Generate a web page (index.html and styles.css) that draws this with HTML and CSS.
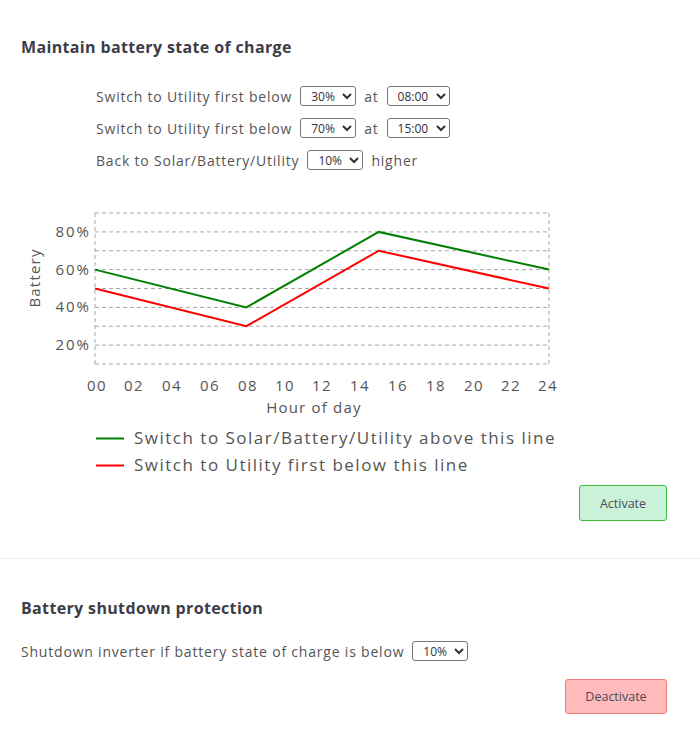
FILE: index.html
```html
<!DOCTYPE html>
<html lang="en">
<head>
    <meta charset="UTF-8">
    <meta name="viewport" content="width=device-width, initial-scale=1.0">
    <title>Battery settings</title>
    <link rel="stylesheet" href="styles.css">
</head>
<body>
    <!-- State of charge schedule -->
    <section class="panel panel-soc">
        <h2>Maintain battery state of charge</h2>

        <div class="options">
            <div class="option-row">
                <span>Switch to Utility first below</span>
                <select class="sel-pct"><option>30%</option></select>
                <span>at</span>
                <select class="sel-time"><option>08:00</option></select>
            </div>
            <div class="option-row">
                <span>Switch to Utility first below</span>
                <select class="sel-pct"><option>70%</option></select>
                <span>at</span>
                <select class="sel-time"><option>15:00</option></select>
            </div>
            <div class="option-row">
                <span>Back to Solar/Battery/Utility</span>
                <select class="sel-pct"><option>10%</option></select>
                <span>higher</span>
            </div>
        </div>

        <svg class="chart" width="560" height="280" viewBox="0 200 560 280">
            <g class="grid">
                <line x1="95" y1="213" x2="549" y2="213" />
                <line x1="95" y1="231.9" x2="549" y2="231.9" />
                <line x1="95" y1="250.75" x2="549" y2="250.75" />
                <line x1="95" y1="269.6" x2="549" y2="269.6" />
                <line x1="95" y1="288.5" x2="549" y2="288.5" />
                <line x1="95" y1="307.4" x2="549" y2="307.4" />
                <line x1="95" y1="326.2" x2="549" y2="326.2" />
                <line x1="95" y1="345.1" x2="549" y2="345.1" />
                <line x1="95" y1="364" x2="549" y2="364" />
                <line x1="95" y1="213" x2="95" y2="364" />
                <line x1="549" y1="213" x2="549" y2="364" />
            </g>
            <g class="y-ticks">
                <text x="91" y="237">80%</text>
                <text x="91" y="275">60%</text>
                <text x="91" y="312">40%</text>
                <text x="91" y="350">20%</text>
            </g>
            <text class="axis-title" transform="translate(40 278) rotate(-90)">Battery</text>
            <g class="x-ticks">
                <text x="97" y="391">00</text>
                <text x="134" y="391">02</text>
                <text x="172" y="391">04</text>
                <text x="210" y="391">06</text>
                <text x="248" y="391">08</text>
                <text x="285" y="391">10</text>
                <text x="322" y="391">12</text>
                <text x="360" y="391">14</text>
                <text x="398" y="391">16</text>
                <text x="436" y="391">18</text>
                <text x="474" y="391">20</text>
                <text x="511" y="391">22</text>
                <text x="548" y="391">24</text>
            </g>
            <text class="axis-title" x="314" y="413">Hour of day</text>

            <polyline class="line-green" points="95,269.6 246.3,307.4 378.75,231.9 549,269.6" />
            <polyline class="line-red" points="95,288.5 246.3,326.2 378.75,250.75 549,288.5" />

            <g class="legend">
                <line class="line-green" x1="96" y1="438.5" x2="124" y2="438.5" />
                <text x="134" y="444">Switch to Solar/Battery/Utility above this line</text>
                <line class="line-red" x1="96" y1="465.5" x2="124" y2="465.5" />
                <text x="134" y="471">Switch to Utility first below this line</text>
            </g>
        </svg>

        <div class="actions">
            <button class="btn btn-activate">Activate</button>
        </div>
    </section>

    <!-- Low battery shutdown -->
    <section class="panel panel-shutdown">
        <h2>Battery shutdown protection</h2>
        <div class="option-row">
            <span>Shutdown inverter if battery state of charge is below</span>
            <select class="sel-pct"><option>10%</option></select>
        </div>
        <div class="actions">
            <button class="btn btn-deactivate">Deactivate</button>
        </div>
    </section>
</body>
</html>
```

FILE: styles.css
```css
body { margin: 0; font-family: "Open Sans", sans-serif; color: #555; background: #fff; }
.panel { padding: 37px 33px 0 21px; }
.panel-soc { padding-bottom: 37px; border-bottom: 1px solid #eee; }
.panel-shutdown { padding-top: 39px; }
h2 { margin: 0; font-size: 16px; line-height: 20px; font-weight: 700; color: #3d3d48; letter-spacing: 0.35px; }
.options { margin: 23px 0 0 75px; }
.option-row { display: flex; align-items: center; gap: 8px; height: 32px; font-size: 14px; letter-spacing: 0.8px; }
.panel-shutdown .option-row { margin-top: 17px; }
select { font-family: "Open Sans", sans-serif; font-size: 12px; letter-spacing: 0; height: 20px; padding: 0 4px 0 6px; color: #333; border: 1px solid #767676; border-radius: 3px; background: #fff; }
.sel-pct { width: 56px; }
.sel-time { width: 63px; }
.chart { display: block; margin: 24px 0 0 -21px; }
.chart text { font-family: "Open Sans", sans-serif; fill: #555; }
.grid line { stroke: #a8a8a8; stroke-width: 1; stroke-dasharray: 4 3; }
.y-ticks text { font-size: 15px; text-anchor: end; letter-spacing: 2px; }
.x-ticks text { font-size: 15px; text-anchor: middle; letter-spacing: 1.5px; }
.axis-title { font-size: 15px; text-anchor: middle; letter-spacing: 1.2px; }
.legend text { font-size: 17px; letter-spacing: 1.5px; }
.line-green { fill: none; stroke: #008000; stroke-width: 2; }
.line-red { fill: none; stroke: #ff0000; stroke-width: 2; }
.actions { display: flex; justify-content: flex-end; margin-top: 5px; }
.panel-shutdown .actions { margin-top: 12px; }
.btn { font-family: "Open Sans", sans-serif; font-size: 12.5px; color: #4a4a58; border-radius: 3px; padding: 0; height: 36px; cursor: pointer; }
.btn-activate { width: 88px; background: #c9f2d9; border: 1px solid #3cbf3c; }
.btn-deactivate { width: 102px; height: 35px; background: #ffbbbb; border: 1px solid #f07a7a; }
```
